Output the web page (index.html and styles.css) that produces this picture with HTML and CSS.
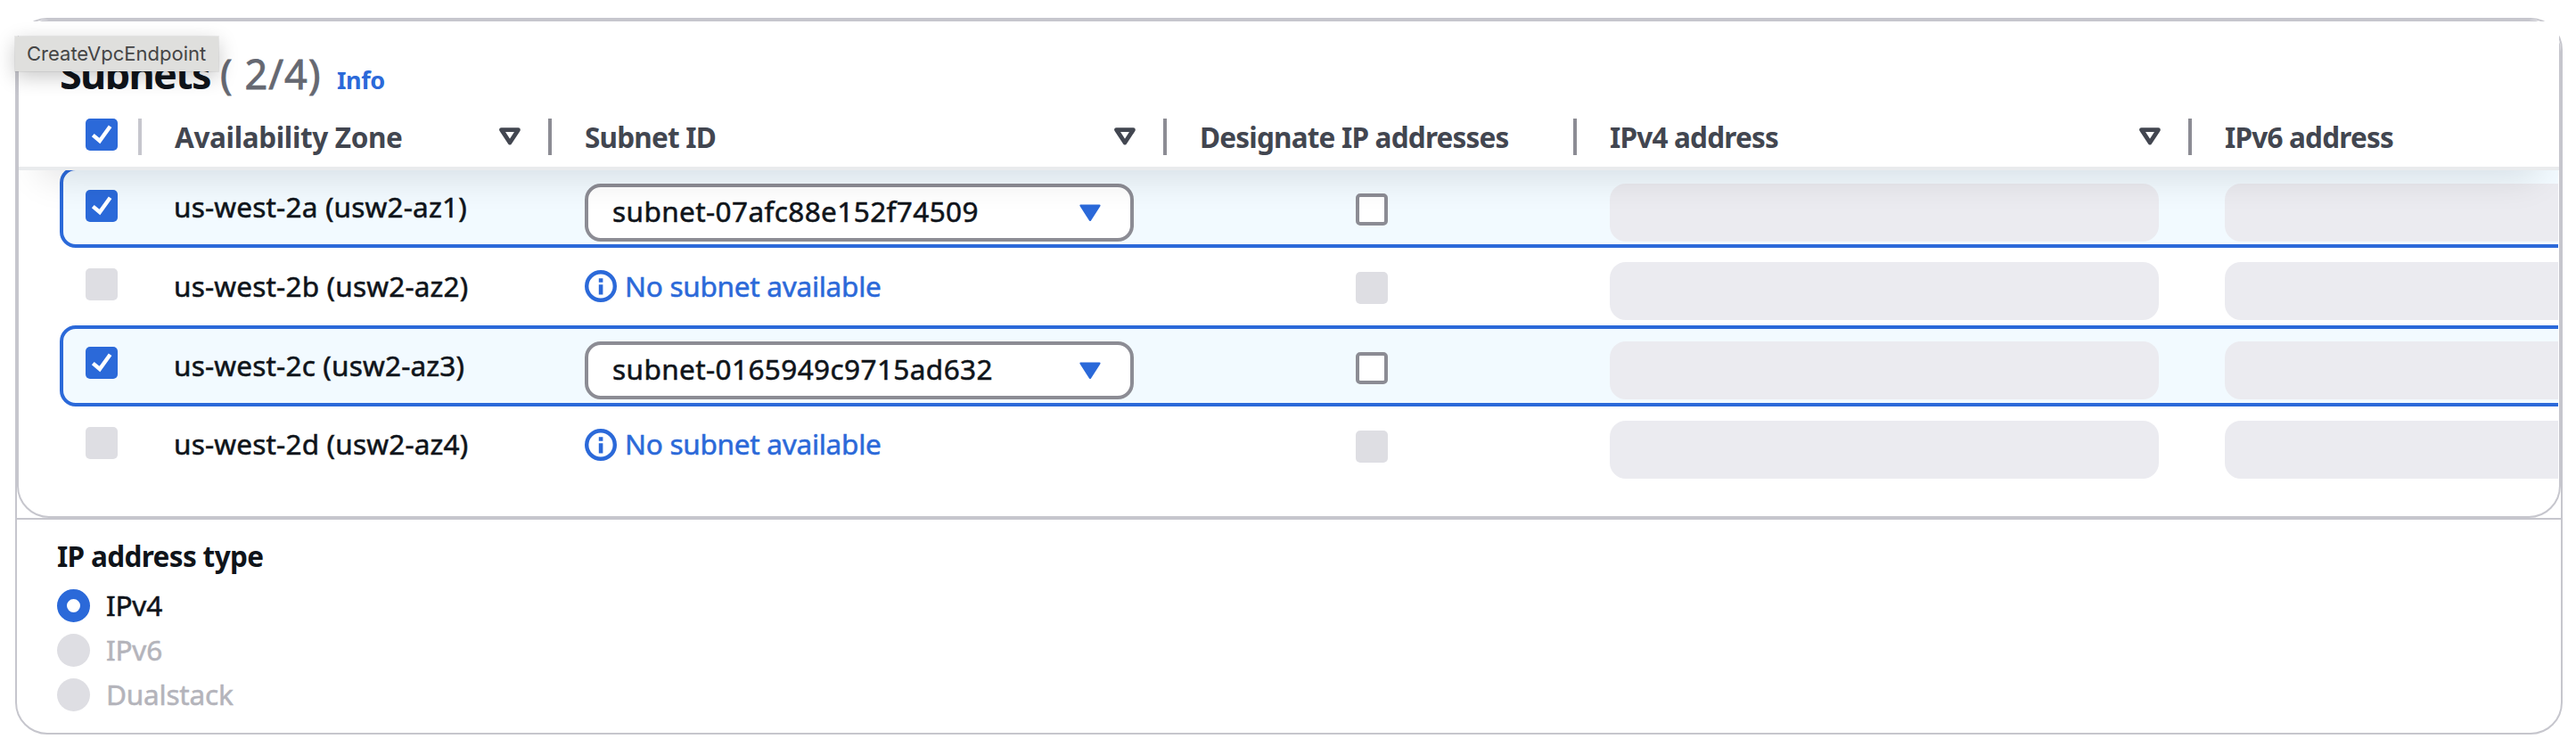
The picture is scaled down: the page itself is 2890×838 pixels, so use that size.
FILE: index.html
```html
<!DOCTYPE html>
<html lang="en">
<head>
<meta charset="utf-8">
<title>Create VPC endpoint</title>
<link rel="stylesheet" href="styles.css">
</head>
<body>
<svg class="defs" aria-hidden="true">
  <symbol id="check" viewBox="0 0 36 36"><path d="M8.3 18.6 L15.9 25 L27.6 8.8" fill="none" stroke="#fff" stroke-width="4.4"/></symbol>
  <symbol id="sort" viewBox="0 0 24 20"><path d="M2.6 2.6 H21.4 L12 17 Z" fill="none" stroke="#424650" stroke-width="4.8" stroke-linejoin="round"/></symbol>
  <symbol id="caret" viewBox="0 0 24 20"><path d="M1.6 1.6 H22.4 L12 17.8 Z" fill="#2b69d9" stroke="#2b69d9" stroke-width="2.4" stroke-linejoin="round"/></symbol>
  <symbol id="info" viewBox="0 0 36 36"><circle cx="18" cy="18" r="15.8" fill="none" stroke="#2b69d9" stroke-width="4.4"/><path d="M15.8 9.3h4.6v4.5h-4.6zM15.8 16.2h4.6v11.3h-4.6z" fill="#2b69d9"/></symbol>
</svg>
<div class="card">
  <section class="subnets">
    <header class="head">
      <div class="title"><h2>Subnets</h2><span class="count">( 2/4)</span><a class="info-link">Info</a></div>
      <div class="grid columns">
        <div class="cell pick"><svg class="box on"><use href="#check"/></svg></div>
        <div class="cell"><span class="t-az">Availability Zone</span><svg class="tri"><use href="#sort"/></svg></div>
        <div class="cell"><span class="t-col">Subnet ID</span><svg class="tri"><use href="#sort"/></svg></div>
        <div class="cell"><span class="t-col">Designate IP addresses</span></div>
        <div class="cell"><span class="t-col">IPv4 address</span><svg class="tri"><use href="#sort"/></svg></div>
        <div class="cell"><span class="t-col">IPv6 address</span></div>
      </div>
    </header>
    <div class="rows">
      <div class="grid row selected first">
        <div class="cell pick"><svg class="box on"><use href="#check"/></svg></div>
        <div class="cell zone">us-west-2a (usw2-az1)</div>
        <div class="cell"><div class="select"><span>subnet-07afc88e152f74509</span><svg class="tri"><use href="#caret"/></svg></div></div>
        <div class="cell mid"><span class="box open"></span></div>
        <div class="cell"><div class="field"></div></div>
        <div class="cell"><div class="field"></div></div>
      </div>
      <div class="grid row">
        <div class="cell pick"><span class="box off"></span></div>
        <div class="cell zone">us-west-2b (usw2-az2)</div>
        <div class="cell none"><svg class="info"><use href="#info"/></svg><span>No subnet available</span></div>
        <div class="cell mid"><span class="box off"></span></div>
        <div class="cell"><div class="field"></div></div>
        <div class="cell"><div class="field"></div></div>
      </div>
      <div class="grid row selected">
        <div class="cell pick"><svg class="box on"><use href="#check"/></svg></div>
        <div class="cell zone">us-west-2c (usw2-az3)</div>
        <div class="cell"><div class="select"><span>subnet-0165949c9715ad632</span><svg class="tri"><use href="#caret"/></svg></div></div>
        <div class="cell mid"><span class="box open"></span></div>
        <div class="cell"><div class="field"></div></div>
        <div class="cell"><div class="field"></div></div>
      </div>
      <div class="grid row last">
        <div class="cell pick"><span class="box off"></span></div>
        <div class="cell zone">us-west-2d (usw2-az4)</div>
        <div class="cell none"><svg class="info"><use href="#info"/></svg><span>No subnet available</span></div>
        <div class="cell mid"><span class="box off"></span></div>
        <div class="cell"><div class="field"></div></div>
        <div class="cell"><div class="field"></div></div>
      </div>
    </div>
  </section>
  <section class="type">
    <h3>IP address type</h3>
    <div class="option"><span class="radio on"></span><span>IPv4</span></div>
    <div class="option disabled"><span class="radio"></span><span>IPv6</span></div>
    <div class="option disabled"><span class="radio"></span><span>Dualstack</span></div>
  </section>
</div>
<div class="tooltip">CreateVpcEndpoint</div>
</body>
</html>
```

FILE: styles.css
```css
* { box-sizing: border-box; }
body {
  margin: 0;
  padding: 20px 15px 14px 17px;
  height: 838px;
  overflow: hidden;
  background: #fff;
  color: #0f141a;
  font: 31.5px/45px "Noto Sans", "Open Sans", sans-serif;
  white-space: nowrap;
}
h2, h3 { margin: 0; }
.defs { position: absolute; width: 0; height: 0; }

.card {
  height: 804px;
  border: 2px solid #c6c6cd;
  border-radius: 36px;
}
.subnets {
  height: 559px;
  border: 2px solid #c6c6cd;
  border-radius: 36px;
}
.head {
  position: relative;
  z-index: 1;
  height: 167px;
  background: #fff;
  border-bottom: 4px solid #e9ebed;
  box-shadow: 0 33px 40px -24px rgba(0, 7, 22, .11);
  clip-path: inset(0 0 -70px 0);
}
.title {
  display: flex;
  align-items: baseline;
  height: 109px;
  padding: 29px 0 0 46px;
  line-height: 60px;
}
h2 { width: 171px; font-size: 45px; font-weight: 700; letter-spacing: -1.7px; }
.count { width: 119px; margin-left: 9px; font-size: 45px; letter-spacing: 1.1px; color: #656871; -webkit-text-stroke: .8px; }
.info-link { margin-left: 12px; font-size: 27px; font-weight: 700; letter-spacing: -.4px; color: #2b69d9; }

.grid {
  display: grid;
  grid-template-columns: 92px 460px 690px 460px 690px 690px;
}
.columns {
  width: 2804px;
  margin-left: 46px;
  overflow: hidden;
  color: #424650;
  font-weight: 700;
}
.columns .cell {
  display: flex;
  justify-content: space-between;
  height: 41px;
  padding: 0 35px 0 37px;
  border-right: 4px solid #8c8c94;
  line-height: 41px;
}
.columns .tri { margin: 10px -4px 0 0; }
.columns .cell.pick { padding: 0 0 0 29px; border-color: #c6c6cd; }
.t-az { letter-spacing: -.35px; }
.t-col { letter-spacing: -.8px; }

.rows { width: 2803px; margin-left: 46px; overflow: hidden; margin-top: -4px; }
.row { width: 3200px; height: 87px; -webkit-text-stroke: .55px; }
.row .cell { padding: 16px 37px 0; }
.row .cell.pick { padding: 23px 0 0 29px; }
.row .cell.zone { padding: 20px 0 0 36px; letter-spacing: .2px; }
.row .cell.mid { display: flex; justify-content: center; padding-top: 27px; }
.row .none { display: flex; gap: 9px; color: #2b69d9; padding-top: 20px; letter-spacing: -.26px; }
.row .info { margin-top: 5px; }
.row.last .zone, .row.last .none { padding-top: 19px; }
.row.last .info { margin-top: 6px; }
.selected {
  height: 91px;
  border: 4px solid #2b69d9;
  border-radius: 18px;
  background: #f2faff;
  grid-template-columns: 88px 460px 690px 460px 690px 690px;
}
.selected .cell { padding-top: 14px; }
.selected .cell.pick { padding: 20px 0 0 25px; }
.selected .cell.zone { padding-top: 18px; }
.selected .cell.mid { padding-top: 26px; }
.first .cell { padding-top: 15px; }
.first .cell.pick { padding-top: 22px; }

.box { display: block; width: 36px; height: 36px; border-radius: 5px; flex: none; }
.box.on { background: #2b69d9; }
.box.off { background: #dedee3; }
.box.open { background: #fff; border: 4px solid #8c8c94; }
.tri { width: 24px; height: 20px; flex: none; }
.info { width: 36px; height: 36px; flex: none; }
.select {
  display: flex;
  justify-content: space-between;
  height: 65px;
  padding: 4px 33px 0 27px;
  border: 4px solid #8c8c94;
  border-radius: 18px;
  background: #fff;
  letter-spacing: .41px;
}
.select .tri { margin-top: 15px; }
.field { height: 65px; border-radius: 18px; background: #ebebf0; }

.type { padding: 18px 0 0 45px; border-top: 2px solid #c6c6cd; }
h3 { font-size: 31.5px; font-weight: 700; letter-spacing: -.65px; margin-bottom: 11px; }
.option { display: flex; gap: 18px; height: 50px; line-height: 44px; letter-spacing: -.2px; -webkit-text-stroke: .55px; }
.radio { width: 37px; height: 37px; margin-top: 4px; border-radius: 50%; background: #dedee3; flex: none; }
.radio.on { border: 11px solid #2b69d9; background: #fff; }
.disabled { color: #b4b4bb; }

.tooltip {
  position: absolute;
  left: 17px;
  top: 41px;
  z-index: 2;
  width: 228px;
  height: 39px;
  padding-left: 13px;
  background: #dfdfdd;
  box-shadow: 0 0 0 1px rgba(0, 0, 0, .06), 0 6px 22px rgba(0, 0, 0, .22);
  color: #454545;
  font: 22px/38px Inter, sans-serif;
}
```
